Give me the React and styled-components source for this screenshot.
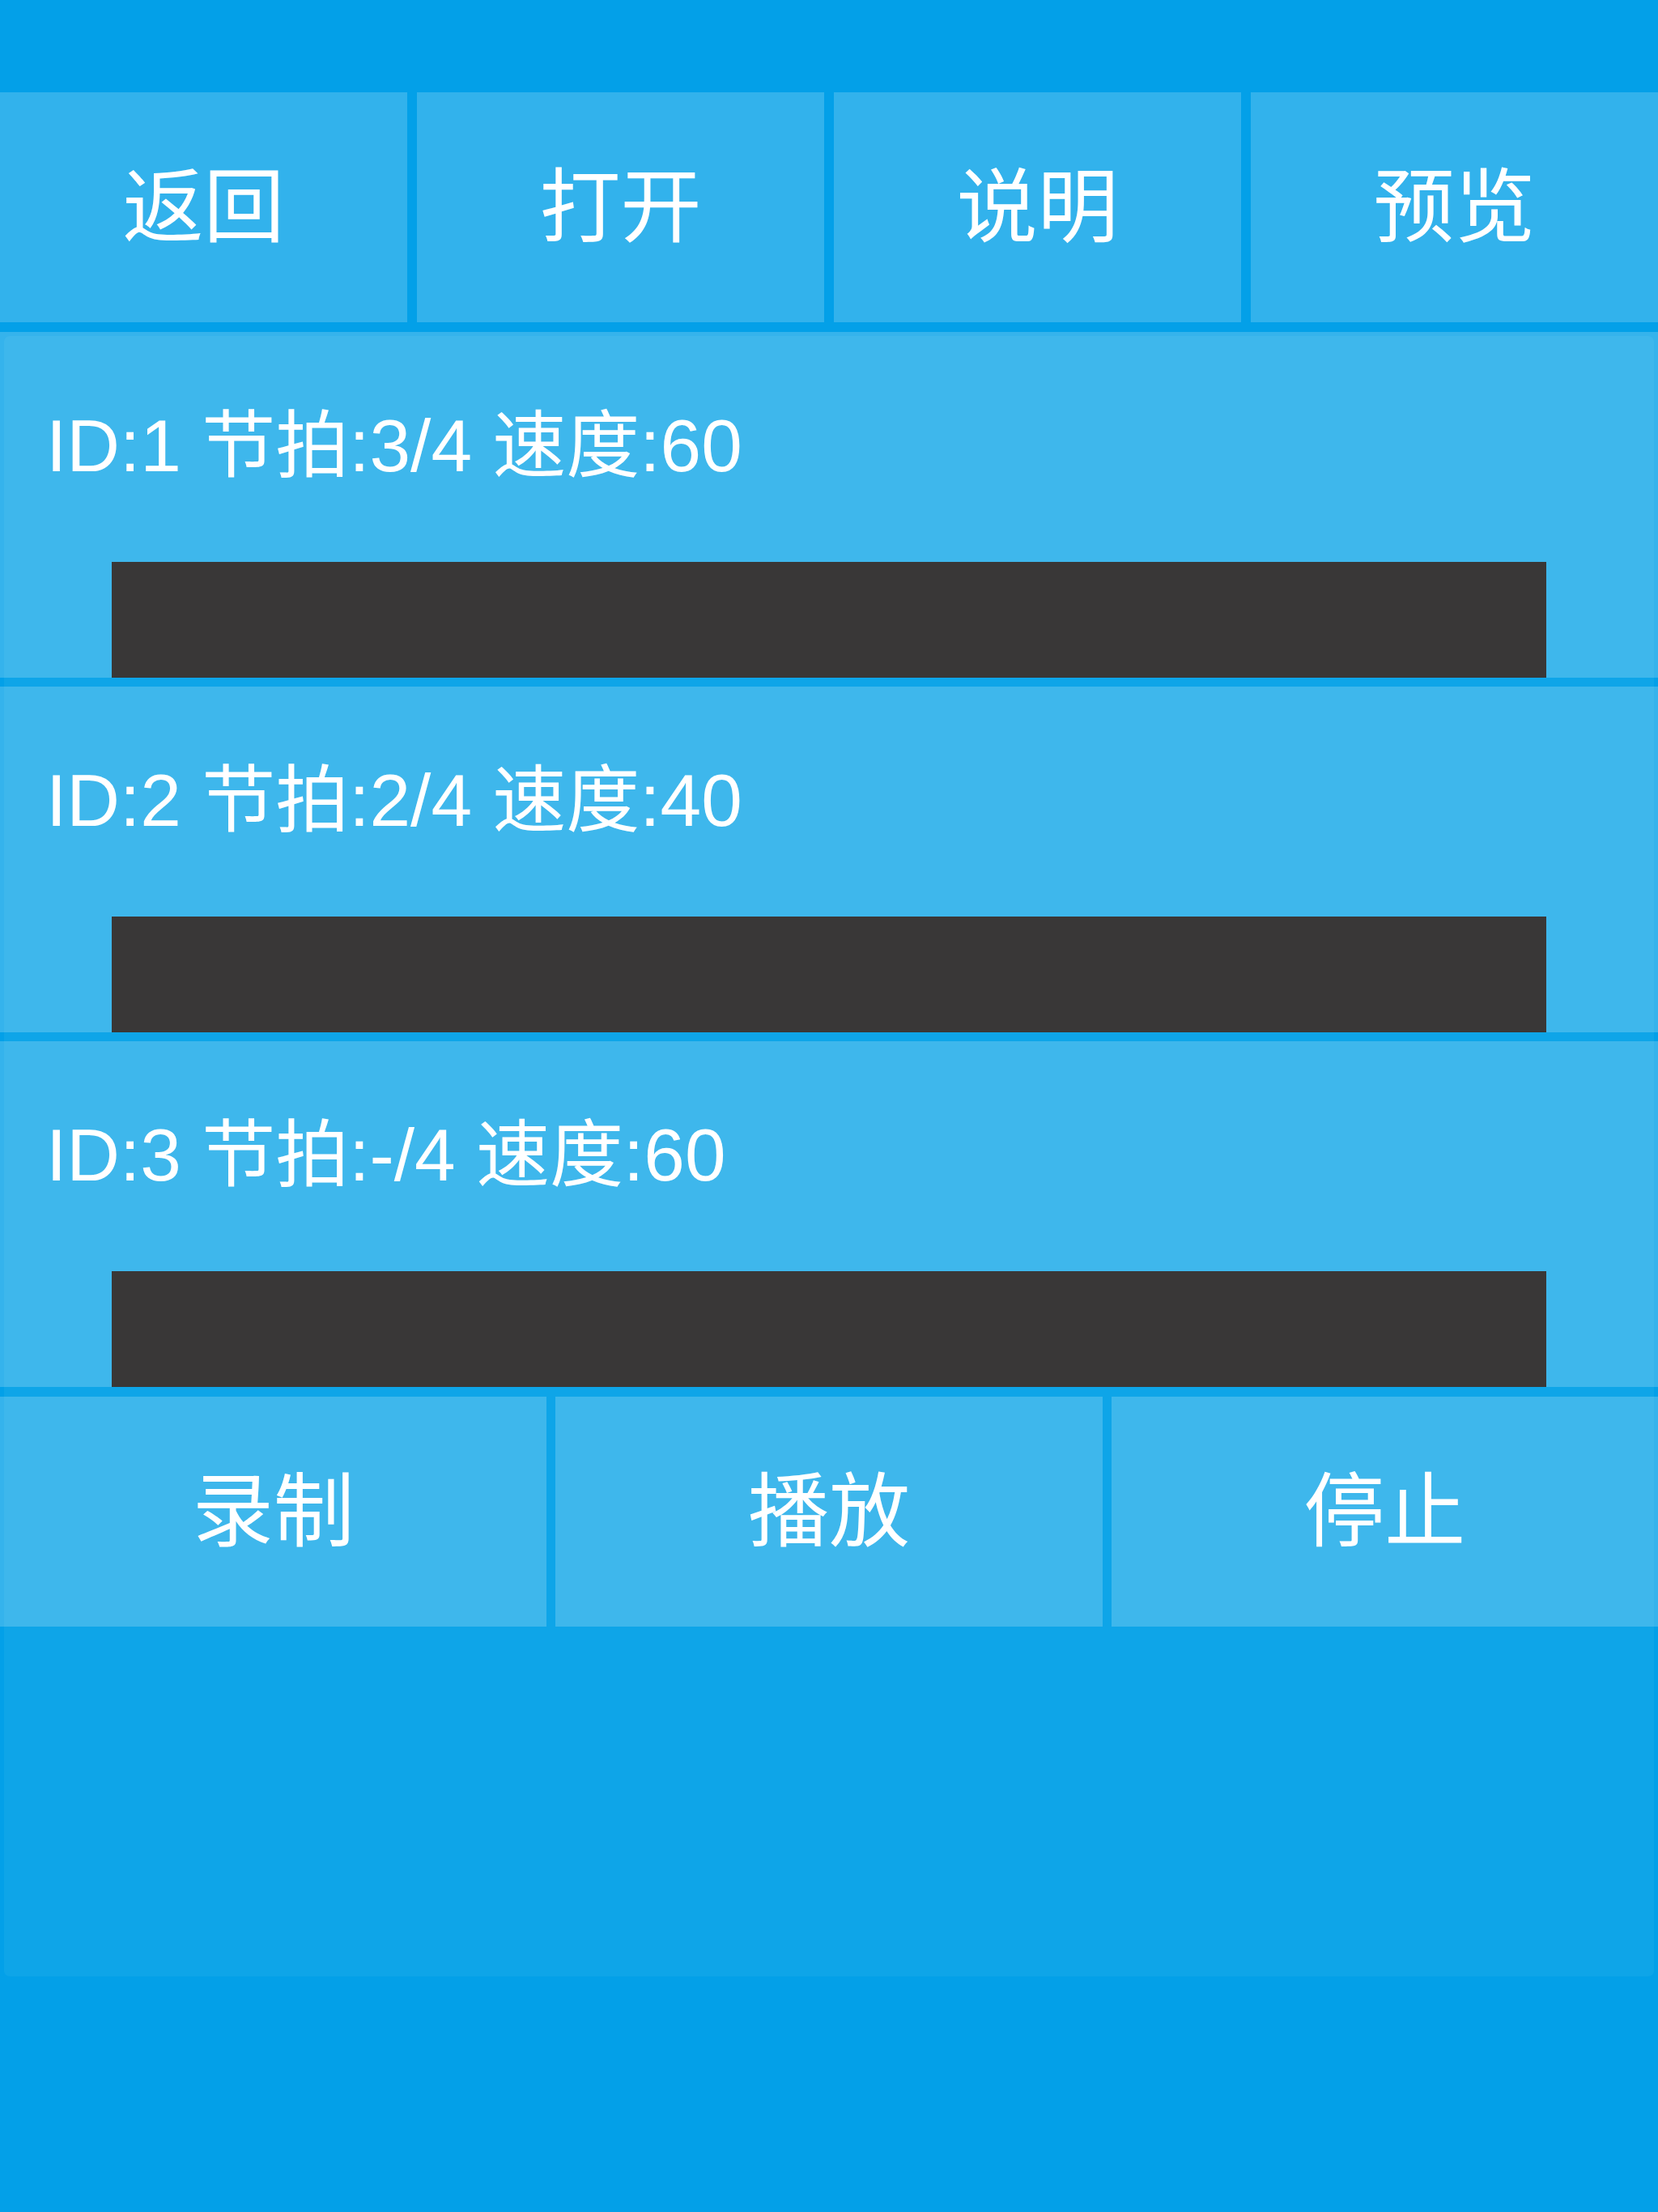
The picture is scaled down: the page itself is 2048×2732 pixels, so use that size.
import React from "react";
import styled, { createGlobalStyle } from "styled-components";

const PAGE_BLUE = "#03a0e8";
const CARD_BLUE = "#0ea5e8";

const GlobalStyle = createGlobalStyle`
  html, body {
    margin: 0;
    padding: 0;
    background: ${PAGE_BLUE};
  }
  * {
    box-sizing: border-box;
  }
`;

const Page = styled.div`
  width: 2048px;
  min-height: 2732px;
  background: ${PAGE_BLUE};
  font-family: "Liberation Sans", "Noto Sans CJK SC", sans-serif;
  color: #fff;
`;

const StatusArea = styled.div`
  height: 114px;
`;

const ButtonBar = styled.div`
  display: grid;
  grid-template-columns: repeat(${(p) => p.cols}, 1fr);
  column-gap: ${(p) => p.gap}px;
`;

const TopButton = styled.button`
  height: 284px;
  border: none;
  border-radius: 0;
  padding: 0 0 16px;
  background: rgba(255, 255, 255, 0.19);
  color: #fff;
  font-family: "Noto Sans CJK SC", sans-serif;
  font-size: 100px;
  line-height: 1;
  display: flex;
  align-items: center;
  justify-content: center;
`;

const ListCard = styled.div`
  margin-top: 12px;
  height: 2036px;
  border: 5px solid transparent;
  border-radius: 12px;
  background: ${CARD_BLUE};
  background-clip: padding-box;
`;

const Rows = styled.div`
  display: flex;
  flex-direction: column;
  gap: 11px;
  margin: -5px -5px 0;
`;

const Row = styled.div`
  height: 427px;
  padding-top: 95px;
  background: rgba(255, 255, 255, 0.2);
  display: flex;
  flex-direction: column;
`;

const RowText = styled.div`
  padding-left: 57px;
  height: 92px;
  font-size: 91px;
  line-height: 92px;
  white-space: nowrap;
`;

const Track = styled.div`
  margin: 97px 138px 0;
  height: 143px;
  background: #393737;
`;

const FooterBar = styled(ButtonBar)`
  margin: 12px -5px 0;
`;

const FooterButton = styled(TopButton)`
  background: rgba(255, 255, 255, 0.2);
`;

const tracks = [
  { id: 1, beat: "3/4", speed: 60 },
  { id: 2, beat: "2/4", speed: 40 },
  { id: 3, beat: "-/4", speed: 60 },
];

export default function App() {
  return (
    <Page>
      <GlobalStyle />
      <StatusArea />
      <ButtonBar cols={4} gap={12}>
        <TopButton>返回</TopButton>
        <TopButton>打开</TopButton>
        <TopButton>说明</TopButton>
        <TopButton>预览</TopButton>
      </ButtonBar>
      <ListCard>
        <Rows>
          {tracks.map((t) => (
            <Row key={t.id}>
              <RowText>
                ID:{t.id} 节拍:{t.beat} 速度:{t.speed}
              </RowText>
              <Track />
            </Row>
          ))}
        </Rows>
        <FooterBar cols={3} gap={11}>
          <FooterButton>录制</FooterButton>
          <FooterButton>播放</FooterButton>
          <FooterButton>停止</FooterButton>
        </FooterBar>
      </ListCard>
    </Page>
  );
}
